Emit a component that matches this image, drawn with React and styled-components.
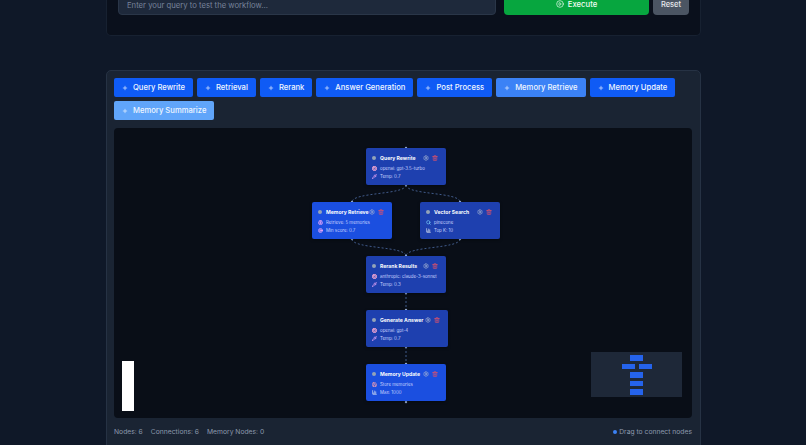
import styled, { createGlobalStyle } from 'styled-components';
import { Plus, CirclePlay, Settings, Trash2, Cpu, Pipette, Search, ChartColumn, Brain, Target, Save } from 'lucide-react';

const NODES = [
  { id: 'rewrite', title: 'Query Rewrite', x: 252, y: 20, width: 80, rows: [[Cpu, 'openai: gpt-3.5-turbo', '#f9a8d4'], [Pipette, 'Temp: 0.7', '#f0abfc']] },
  { id: 'memory', title: 'Memory Retrieve', x: 198, y: 74, width: 80, active: true, rows: [[Brain, 'Retrieve: 5 memories', '#f0abfc'], [Target, 'Min score: 0.7', '#f0abfc']] },
  { id: 'vector', title: 'Vector Search', x: 306, y: 74, width: 80, rows: [[Search, 'pinecone', '#7dd3fc'], [ChartColumn, 'Top K: 10', '#e2e8f0']] },
  { id: 'rerank', title: 'Rerank Results', x: 252, y: 128, width: 80, rows: [[Cpu, 'anthropic: claude-3-sonnet', '#f9a8d4'], [Pipette, 'Temp: 0.3', '#f0abfc']] },
  { id: 'answer', title: 'Generate Answer', x: 252, y: 182, width: 82, rows: [[Cpu, 'openai: gpt-4', '#f9a8d4'], [Pipette, 'Temp: 0.7', '#f0abfc']] },
  { id: 'update', title: 'Memory Update', x: 252, y: 236, width: 80, active: true, rows: [[Save, 'Store memories', '#fda4af'], [ChartColumn, 'Max: 1000', '#e2e8f0']] },
];

const TOOLS = ['Query Rewrite', 'Retrieval', 'Rerank', 'Answer Generation', 'Post Process', 'Memory Retrieve', 'Memory Update', 'Memory Summarize'];

const EDGES = [
  'M292 57 C292 67 238 64 238 74',
  'M292 57 C292 67 346 64 346 74',
  'M238 111 C238 121 292 118 292 128',
  'M346 111 C346 121 292 118 292 128',
  'M292 165 L292 182',
  'M292 219 L292 236',
];

const PORTS = [[292, 20], [292, 57], [238, 74], [346, 74], [238, 111], [346, 111], [292, 128], [292, 165], [292, 182], [292, 219], [292, 236], [292, 274]];

const MINI_ROWS = [[1], [1, 1], [1], [1], [1]];

function FlowNode({ node }) {
  return (
    <NodeCard $x={node.x} $y={node.y} $width={node.width} $active={node.active}>
      <NodeHead>
        <NodeDot />
        <NodeTitle>{node.title}</NodeTitle>
        <Settings size={6} color="#a5b4d4" strokeWidth={2.5} />
        <Trash2 size={6} color="#e0526a" strokeWidth={2.5} />
      </NodeHead>
      {node.rows.map(([Icon, label, color]) => (
        <NodeRow key={label}>
          <Icon size={5} color={color} strokeWidth={3} />
          <span>{label}</span>
        </NodeRow>
      ))}
    </NodeCard>
  );
}

export default function App() {
  return (
    <Page>
      <GlobalStyle />
      <TopPanel>
        <QueryInput placeholder="Enter your query to test the workflow..." />
        <ExecuteButton>
          <CirclePlay size={8} />
          Execute
        </ExecuteButton>
        <ResetButton>Reset</ResetButton>
      </TopPanel>

      <BuilderPanel>
        <Toolbar>
          {TOOLS.map((tool) => (
            <ToolButton key={tool} $tone={tool === 'Memory Summarize' ? 'light' : tool === 'Memory Retrieve' ? 'mid' : 'base'}>
              <Plus size={6} strokeWidth={2.5} />
              {tool}
            </ToolButton>
          ))}
        </Toolbar>

        <Canvas>
          <Edges viewBox="0 0 578 290">
            {EDGES.map((d) => (
              <path key={d} d={d} fill="none" stroke="#4f6fa8" strokeWidth="0.8" strokeDasharray="2 2" />
            ))}
            {PORTS.map(([cx, cy]) => (
              <circle key={`${cx}-${cy}`} cx={cx} cy={cy} r="1.2" fill="#9db4dc" />
            ))}
          </Edges>
          {NODES.map((node) => (
            <FlowNode key={node.id} node={node} />
          ))}
          <Controls />
          <MiniMap>
            {MINI_ROWS.map((row, i) => (
              <MiniRow key={i}>
                {row.map((_, j) => (
                  <MiniBlock key={j} />
                ))}
              </MiniRow>
            ))}
          </MiniMap>
        </Canvas>

        <Footer>
          <Stats>
            <span>Nodes: 6</span>
            <span>Connections: 6</span>
            <span>Memory Nodes: 0</span>
          </Stats>
          <Hint>
            <HintDot />
            Drag to connect nodes
          </Hint>
        </Footer>
      </BuilderPanel>
    </Page>
  );
}

const GlobalStyle = createGlobalStyle`
  html, body {
    margin: 0;
    padding: 0;
    background: #0f1828;
  }
  * {
    box-sizing: border-box;
  }
`;

const Page = styled.div`
  width: 806px;
  height: 445px;
  overflow: hidden;
  padding: 0 105px 0 106px;
  background: #0f1828;
  font-family: Inter, 'Liberation Sans', sans-serif;
  color: #e2e8f0;
`;

const TopPanel = styled.div`
  height: 36px;
  display: flex;
  align-items: flex-end;
  gap: 4px;
  padding: 0 11px 20px;
  background: #0a101c;
  border: 1px solid #172131;
  border-top: none;
  border-radius: 0 0 5px 5px;
`;

const QueryInput = styled.input`
  flex: none;
  width: 378px;
  height: 34px;
  margin-right: 4px;
  padding: 14px 8px 0;
  background: #1e293b;
  border: 1px solid #2a3648;
  border-radius: 4px;
  font: 7.7px Inter, 'Liberation Sans', sans-serif;
  color: #e2e8f0;

  &::placeholder {
    color: #77839a;
  }
`;

const ExecuteButton = styled.button`
  flex: none;
  width: 145px;
  height: 34px;
  padding-top: 13px;
  display: flex;
  align-items: center;
  justify-content: center;
  gap: 4px;
  background: #07a63f;
  border: none;
  border-radius: 4px;
  font: 500 7.7px Inter, 'Liberation Sans', sans-serif;
  color: #f0fdf4;
`;

const ResetButton = styled.button`
  flex: none;
  width: 36px;
  height: 34px;
  padding: 13px 0 0;
  background: #4b5563;
  border: none;
  border-radius: 4px;
  font: 500 7.5px Inter, 'Liberation Sans', sans-serif;
  color: #e5e7eb;
`;

const BuilderPanel = styled.section`
  height: 390px;
  margin-top: 34px;
  padding: 7px 8px 0 7px;
  background: #1a2433;
  border: 1px solid #263244;
  border-radius: 5px;
`;

const Toolbar = styled.div`
  display: flex;
  flex-wrap: wrap;
  gap: 4px;
`;

const TONES = {
  base: '#0f5bf5',
  mid: '#3b82f6',
  light: '#60a5fa',
};

const ToolButton = styled.button`
  height: 19px;
  display: flex;
  align-items: center;
  gap: 5px;
  padding: 0 8px;
  background: ${(p) => TONES[p.$tone]};
  border: none;
  border-radius: 2px;
  font: 500 7.65px Inter, 'Liberation Sans', sans-serif;
  color: #eff6ff;
`;

const Canvas = styled.div`
  position: relative;
  height: 290px;
  margin-top: 8px;
  background-color: #090e17;
  background-image: radial-gradient(#141b27 0.6px, transparent 0.6px);
  background-size: 6px 6px;
  border-radius: 4px;
  overflow: hidden;
`;

const Edges = styled.svg`
  position: absolute;
  inset: 0;
  width: 578px;
  height: 290px;
`;

const NodeCard = styled.div`
  position: absolute;
  left: ${(p) => p.$x}px;
  top: ${(p) => p.$y}px;
  width: ${(p) => p.$width}px;
  height: 37px;
  padding: 6px 8px 6px 6px;
  background: ${(p) => (p.$active ? '#1b4fe0' : '#1e40af')};
  border-radius: 2px;
  box-shadow: 0 1px 3px rgba(0, 0, 0, 0.4);
`;

const NodeHead = styled.div`
  display: flex;
  align-items: center;
  gap: 3.5px;
  height: 8px;
  margin-bottom: 3px;
`;

const NodeDot = styled.span`
  flex: none;
  width: 4px;
  height: 4px;
  margin-right: 0.5px;
  border-radius: 50%;
  background: #94a3b8;
`;

const NodeTitle = styled.span`
  flex: 1;
  min-width: 0;
  font-size: 5.1px;
  font-weight: 700;
  color: #f8fafc;
  white-space: nowrap;
`;

const NodeRow = styled.div`
  display: flex;
  align-items: center;
  gap: 3px;
  height: 7.5px;
  font-size: 4.4px;
  color: #c7d2fe;
  white-space: nowrap;
`;

const Controls = styled.div`
  position: absolute;
  left: 8px;
  bottom: 7px;
  width: 12px;
  height: 50px;
  background: #fff;
`;

const MiniMap = styled.div`
  position: absolute;
  right: 10px;
  bottom: 21px;
  width: 91px;
  height: 45px;
  display: flex;
  flex-direction: column;
  align-items: center;
  gap: 3px;
  padding-top: 3px;
  background: #1e2838;
`;

const MiniRow = styled.div`
  display: flex;
  gap: 4px;
`;

const MiniBlock = styled.span`
  width: 13px;
  height: 5.5px;
  background: #2563eb;
`;

const Footer = styled.div`
  display: flex;
  justify-content: space-between;
  align-items: center;
  margin-top: 9px;
  font-size: 6.75px;
  color: #8c99ad;
`;

const Stats = styled.div`
  display: flex;
  gap: 8px;
`;

const Hint = styled.div`
  display: flex;
  align-items: center;
  gap: 2px;
`;

const HintDot = styled.span`
  width: 4px;
  height: 4px;
  border-radius: 50%;
  background: #3b82f6;
`;
